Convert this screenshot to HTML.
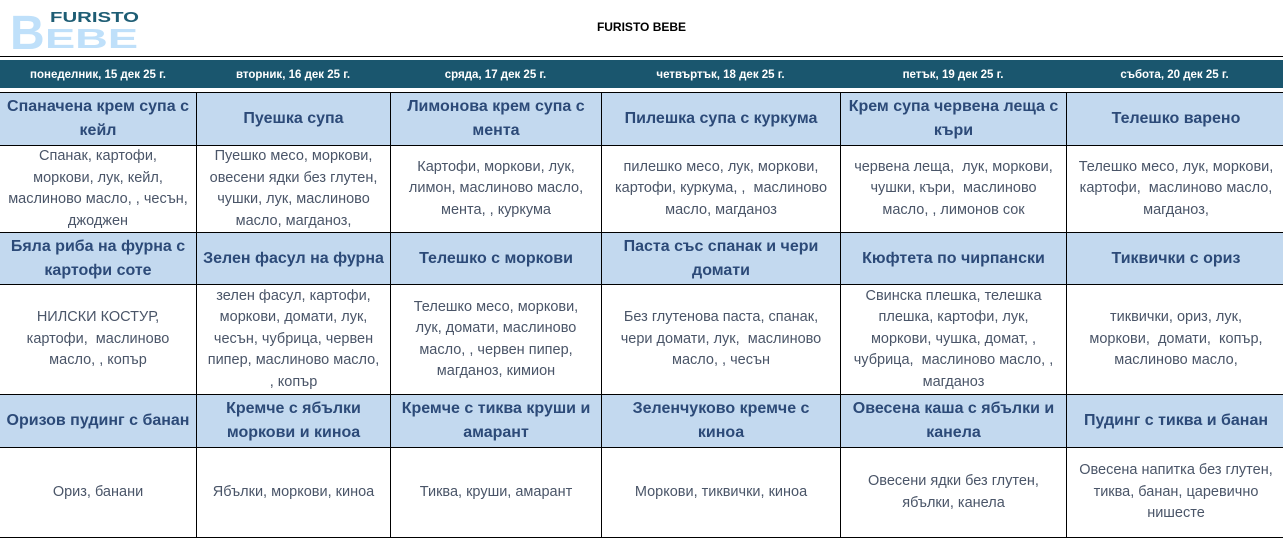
<!DOCTYPE html>
<html><head><meta charset="utf-8"><style>
body{margin:0;width:1283px;height:531px;overflow:hidden;background:#fff;font-family:"Liberation Sans",sans-serif;position:relative}
.logo{position:absolute;left:9px;top:6px}
.title{position:absolute;top:20px;left:0;width:1283px;text-align:center;font-weight:bold;font-size:12px;color:#000}
.line{position:absolute;left:0;top:56px;width:1283px;height:1px;background:#000}
.band{position:absolute;left:0;top:60px;width:1283px;height:28px;background:#1a566e;display:flex}
.band div{color:#fff;font-size:11.5px;font-weight:bold;text-align:center;line-height:30px}
table{position:absolute;left:-1px;top:92px;border-collapse:collapse;table-layout:fixed;width:1286px}
td{border:1px solid #000;text-align:center;vertical-align:middle;padding:0;overflow:hidden;white-space:nowrap}
td.h{background:#c3d9ef;color:#2c4a78;font-weight:bold;font-size:16px;line-height:24px}
td.b{color:#4a5568;font-size:14.5px;line-height:21.5px}
</style></head><body>
<svg class="logo" width="132" height="46" viewBox="0 0 132 46">
<text x="1" y="43" font-family="Liberation Sans" font-weight="bold" font-size="48" fill="#bfe0fa">B</text>
<text x="36" y="42" font-family="Liberation Sans" font-weight="bold" font-size="28" fill="#bfe0fa" textLength="93" lengthAdjust="spacingAndGlyphs">EBE</text>
<text x="41" y="16" font-family="Liberation Sans" font-weight="bold" font-size="15" fill="#1e5d74" textLength="89" lengthAdjust="spacingAndGlyphs">FURISTO</text>
</svg>
<div class="title">FURISTO BEBE</div>
<div class="line"></div>
<div class="band">
<div style="width:196px">понеделник, 15 дек 25 г.</div>
<div style="width:194px">вторник, 16 дек 25 г.</div>
<div style="width:211px">сряда, 17 дек 25 г.</div>
<div style="width:239px">четвъртък, 18 дек 25 г.</div>
<div style="width:226px">петък, 19 дек 25 г.</div>
<div style="width:217px">събота, 20 дек 25 г.</div>
</div>
<table>
<colgroup><col style="width:197px"><col style="width:194px"><col style="width:211px"><col style="width:239px"><col style="width:226px"><col style="width:219px"></colgroup>
<tr style="height:53px"><td class="h">Спаначена крем супа с<br>кейл</td><td class="h">Пуешка супа</td><td class="h">Лимонова крем супа с<br>мента</td><td class="h">Пилешка супа с куркума</td><td class="h">Крем супа червена леща с<br>къри</td><td class="h">Телешко варено</td></tr>
<tr style="height:87px"><td class="b">Спанак, картофи,<br>моркови, лук, кейл,<br>маслиново масло, , чесън,<br>джоджен</td><td class="b">Пуешко месо, моркови,<br>овесени ядки без глутен,<br>чушки, лук, маслиново<br>масло, магданоз,</td><td class="b">Картофи, моркови, лук,<br>лимон, маслиново масло,<br>мента, , куркума</td><td class="b">пилешко месо, лук, моркови,<br>картофи, куркума, ,&nbsp; маслиново<br>масло, магданоз</td><td class="b">червена леща,&nbsp; лук, моркови,<br>чушки, къри,&nbsp; маслиново<br>масло, , лимонов сок</td><td class="b">Телешко месо, лук, моркови,<br>картофи,&nbsp; маслиново масло,<br>магданоз,</td></tr>
<tr style="height:52px"><td class="h">Бяла риба на фурна с<br>картофи соте</td><td class="h">Зелен фасул на фурна</td><td class="h">Телешко с моркови</td><td class="h">Паста със спанак и чери<br>домати</td><td class="h">Кюфтета по чирпански</td><td class="h">Тиквички с ориз</td></tr>
<tr style="height:110px"><td class="b">НИЛСКИ КОСТУР,<br>картофи,&nbsp; маслиново<br>масло, , копър</td><td class="b">зелен фасул, картофи,<br>моркови, домати, лук,<br>чесън, чубрица, червен<br>пипер, маслиново масло,<br>, копър</td><td class="b">Телешко месо, моркови,<br>лук, домати, маслиново<br>масло, , червен пипер,<br>магданоз, кимион</td><td class="b">Без глутенова паста, спанак,<br>чери домати, лук,&nbsp; маслиново<br>масло, , чесън</td><td class="b">Свинска плешка, телешка<br>плешка, картофи, лук,<br>моркови, чушка, домат, ,<br>чубрица,&nbsp; маслиново масло, ,<br>магданоз</td><td class="b">тиквички, ориз, лук,<br>моркови,&nbsp; домати,&nbsp; копър,<br>маслиново масло,</td></tr>
<tr style="height:53px"><td class="h">Оризов пудинг с банан</td><td class="h">Кремче с ябълки<br>моркови и киноа</td><td class="h">Кремче с тиква круши и<br>амарант</td><td class="h">Зеленчуково кремче с<br>киноа</td><td class="h">Овесена каша с ябълки и<br>канела</td><td class="h">Пудинг с тиква и банан</td></tr>
<tr style="height:90px"><td class="b">Ориз, банани</td><td class="b">Ябълки, моркови, киноа</td><td class="b">Тиква, круши, амарант</td><td class="b">Моркови, тиквички, киноа</td><td class="b">Овесени ядки без глутен,<br>ябълки, канела</td><td class="b">Овесена напитка без глутен,<br>тиква, банан, царевично<br>нишесте</td></tr>
</table>
</body></html>
